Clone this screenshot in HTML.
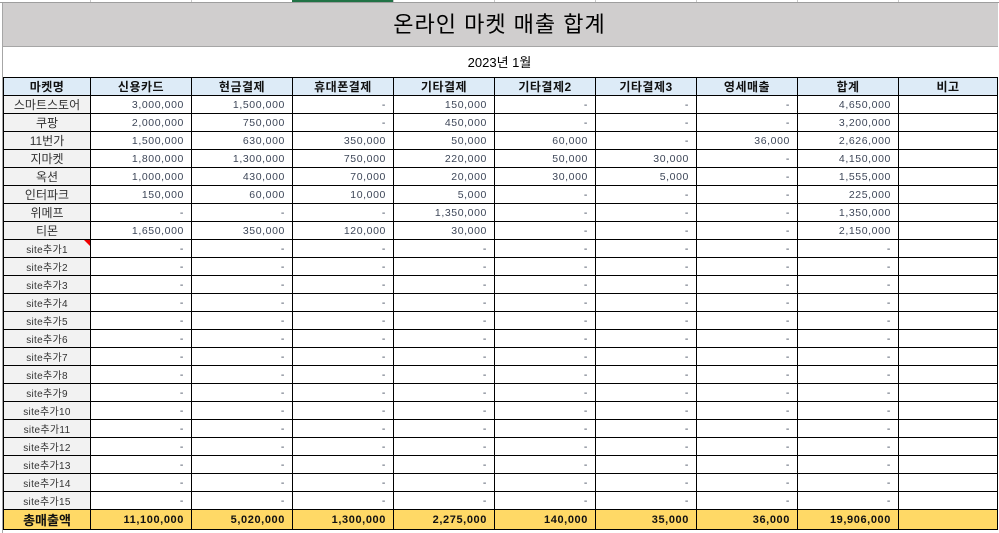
<!DOCTYPE html>
<html><head><meta charset="utf-8"><style>
body{margin:0;width:999px;height:533px;background:#fff;position:relative;overflow:hidden;font-family:"Liberation Sans","Noto Sans CJK KR",sans-serif}
.strip{position:absolute;left:0;top:0;width:999px;height:2px;background:#fff;border-bottom:1px solid #9e9e9e}
.gl{position:absolute;top:0;height:2px;width:1px;background:#c8c8c8}
.band{position:absolute;left:2px;top:3px;width:995px;height:43px;background:#d0cece;border-bottom:1px solid #a6a6a6;border-left:1px solid #a6a6a6}
.title{position:absolute;left:0;top:3px;width:999px;height:43px;line-height:43px;text-align:center;font-size:22px;color:#000;letter-spacing:1px}
.sub{position:absolute;left:0;top:52px;width:999px;text-align:center;font-size:13px;color:#000}
.lb{position:absolute;left:2px;top:47px;width:1px;height:486px;background:#a6a6a6}
table{position:absolute;left:3px;top:77px;border-collapse:collapse;table-layout:fixed}
td{border:1px solid #000;height:17px;padding:0 7px 0 0;font-size:10.5px;text-align:right;color:#3d4658;white-space:nowrap;overflow:hidden;letter-spacing:0.6px}
td.n{text-align:center;padding:0;background:#f2f2f2;color:#333;font-size:12px;letter-spacing:0}
td.s{font-size:10px;letter-spacing:0.3px}
tr.h td{background:#ddebf7;text-align:center;font-weight:bold;font-size:12px;color:#111;padding:0;letter-spacing:0.5px}
tr.t td{background:#ffd966;font-weight:bold;color:#111;font-size:11px}
tr.t td.n{background:#ffd966;font-size:13px}
.mk{position:relative}
.mk:after{content:"";position:absolute;right:0;top:0;border-top:6px solid #e00;border-left:6px solid transparent}
</style></head><body>
<div class="strip"></div>
<div class="gl" style="left:90px"></div><div class="gl" style="left:191px"></div><div class="gl" style="left:393px"></div><div class="gl" style="left:494px"></div><div class="gl" style="left:595px"></div><div class="gl" style="left:696px"></div><div class="gl" style="left:797px"></div><div class="gl" style="left:898px"></div>
<div style="position:absolute;left:292px;top:0;width:101px;height:2px;background:#217346"></div>
<div class="band"></div>
<div class="title">온라인 마켓 매출 합계</div>
<div class="sub">2023년 1월</div>
<div class="lb"></div>
<table>
<colgroup><col style="width:87px"><col style="width:101px"><col style="width:101px"><col style="width:101px"><col style="width:101px"><col style="width:101px"><col style="width:101px"><col style="width:101px"><col style="width:101px"><col style="width:99px"></colgroup>
<tr class="h"><td>마켓명</td><td>신용카드</td><td>현금결제</td><td>휴대폰결제</td><td>기타결제</td><td>기타결제2</td><td>기타결제3</td><td>영세매출</td><td>합계</td><td>비고</td></tr>
<tr><td class="n">스마트스토어</td><td>3,000,000</td><td>1,500,000</td><td>-</td><td>150,000</td><td>-</td><td>-</td><td>-</td><td>4,650,000</td><td></td></tr>
<tr><td class="n">쿠팡</td><td>2,000,000</td><td>750,000</td><td>-</td><td>450,000</td><td>-</td><td>-</td><td>-</td><td>3,200,000</td><td></td></tr>
<tr><td class="n">11번가</td><td>1,500,000</td><td>630,000</td><td>350,000</td><td>50,000</td><td>60,000</td><td>-</td><td>36,000</td><td>2,626,000</td><td></td></tr>
<tr><td class="n">지마켓</td><td>1,800,000</td><td>1,300,000</td><td>750,000</td><td>220,000</td><td>50,000</td><td>30,000</td><td>-</td><td>4,150,000</td><td></td></tr>
<tr><td class="n">옥션</td><td>1,000,000</td><td>430,000</td><td>70,000</td><td>20,000</td><td>30,000</td><td>5,000</td><td>-</td><td>1,555,000</td><td></td></tr>
<tr><td class="n">인터파크</td><td>150,000</td><td>60,000</td><td>10,000</td><td>5,000</td><td>-</td><td>-</td><td>-</td><td>225,000</td><td></td></tr>
<tr><td class="n">위메프</td><td>-</td><td>-</td><td>-</td><td>1,350,000</td><td>-</td><td>-</td><td>-</td><td>1,350,000</td><td></td></tr>
<tr><td class="n">티몬</td><td>1,650,000</td><td>350,000</td><td>120,000</td><td>30,000</td><td>-</td><td>-</td><td>-</td><td>2,150,000</td><td></td></tr>
<tr><td class="n s mk">site추가1</td><td>-</td><td>-</td><td>-</td><td>-</td><td>-</td><td>-</td><td>-</td><td>-</td><td></td></tr>
<tr><td class="n s">site추가2</td><td>-</td><td>-</td><td>-</td><td>-</td><td>-</td><td>-</td><td>-</td><td>-</td><td></td></tr>
<tr><td class="n s">site추가3</td><td>-</td><td>-</td><td>-</td><td>-</td><td>-</td><td>-</td><td>-</td><td>-</td><td></td></tr>
<tr><td class="n s">site추가4</td><td>-</td><td>-</td><td>-</td><td>-</td><td>-</td><td>-</td><td>-</td><td>-</td><td></td></tr>
<tr><td class="n s">site추가5</td><td>-</td><td>-</td><td>-</td><td>-</td><td>-</td><td>-</td><td>-</td><td>-</td><td></td></tr>
<tr><td class="n s">site추가6</td><td>-</td><td>-</td><td>-</td><td>-</td><td>-</td><td>-</td><td>-</td><td>-</td><td></td></tr>
<tr><td class="n s">site추가7</td><td>-</td><td>-</td><td>-</td><td>-</td><td>-</td><td>-</td><td>-</td><td>-</td><td></td></tr>
<tr><td class="n s">site추가8</td><td>-</td><td>-</td><td>-</td><td>-</td><td>-</td><td>-</td><td>-</td><td>-</td><td></td></tr>
<tr><td class="n s">site추가9</td><td>-</td><td>-</td><td>-</td><td>-</td><td>-</td><td>-</td><td>-</td><td>-</td><td></td></tr>
<tr><td class="n s">site추가10</td><td>-</td><td>-</td><td>-</td><td>-</td><td>-</td><td>-</td><td>-</td><td>-</td><td></td></tr>
<tr><td class="n s">site추가11</td><td>-</td><td>-</td><td>-</td><td>-</td><td>-</td><td>-</td><td>-</td><td>-</td><td></td></tr>
<tr><td class="n s">site추가12</td><td>-</td><td>-</td><td>-</td><td>-</td><td>-</td><td>-</td><td>-</td><td>-</td><td></td></tr>
<tr><td class="n s">site추가13</td><td>-</td><td>-</td><td>-</td><td>-</td><td>-</td><td>-</td><td>-</td><td>-</td><td></td></tr>
<tr><td class="n s">site추가14</td><td>-</td><td>-</td><td>-</td><td>-</td><td>-</td><td>-</td><td>-</td><td>-</td><td></td></tr>
<tr><td class="n s">site추가15</td><td>-</td><td>-</td><td>-</td><td>-</td><td>-</td><td>-</td><td>-</td><td>-</td><td></td></tr>
<tr class="t"><td class="n">총매출액</td><td>11,100,000</td><td>5,020,000</td><td>1,300,000</td><td>2,275,000</td><td>140,000</td><td>35,000</td><td>36,000</td><td>19,906,000</td><td></td></tr>
</table>
</body></html>
